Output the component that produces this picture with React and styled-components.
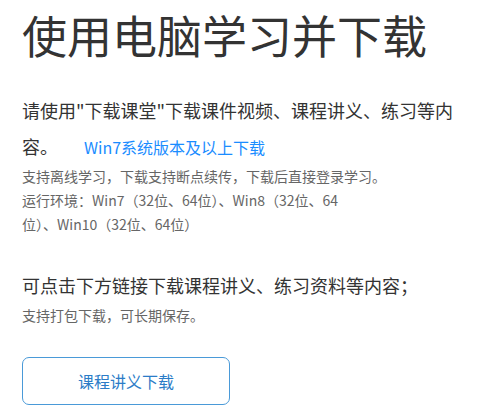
import styled, { createGlobalStyle } from "styled-components";

const GlobalStyle = createGlobalStyle`
  body {
    margin: 0;
    background: #fff;
    font-family: "Noto Sans CJK SC", "Liberation Sans", sans-serif;
  }
`;

/* 전체 */
const Page = styled.div`
  padding: 0 22px;
`;

const Title = styled.h1`
  margin: 0;
  font-size: 45px;
  line-height: 70px;
  font-weight: 400;
  color: #333;
`;

const Section = styled.div`
  margin-top: ${(p) => p.$top}px;
`;

const Lead = styled.p`
  margin: 0;
  font-size: 18px;
  line-height: 36px;
  color: #333;
`;

const Link = styled.a`
  display: inline-block;
  margin-left: 26px;
  font-size: 16px;
  line-height: 24px;
  color: #1a8cff;
  text-decoration: none;
  cursor: pointer;
`;

const Note = styled.p`
  margin: 0;
  font-size: 14px;
  line-height: 24px;
  color: #666;
  max-width: ${(p) => (p.$narrow ? "340px" : "none")};
`;

const Button = styled.button`
  display: block;
  margin-top: 30px;
  width: 208px;
  height: 48px;
  border: 1px solid #4a9ad8;
  border-radius: 7px;
  background: #fff;
  color: #2b7cc7;
  font-family: inherit;
  font-size: 16px;
  cursor: pointer;
`;

export default function App() {
  return (
    <>
      <GlobalStyle />
      <Page>
        <Title>使用电脑学习并下载</Title>
        <Section $top={22}>
          <Lead>
            请使用"下载课堂"下载课件视频、课程讲义、练习等内容。
            <Link>Win7系统版本及以上下载</Link>
          </Lead>
          <Note>支持离线学习，下载支持断点续传，下载后直接登录学习。</Note>
          <Note $narrow>
            运行环境：Win7（32位、64位）、Win8（32位、64位）、Win10（32位、64位）
          </Note>
        </Section>
        <Section $top={31}>
          <Lead>可点击下方链接下载课程讲义、练习资料等内容；</Lead>
          <Note>支持打包下载，可长期保存。</Note>
          <Button>课程讲义下载</Button>
        </Section>
      </Page>
    </>
  );
}
